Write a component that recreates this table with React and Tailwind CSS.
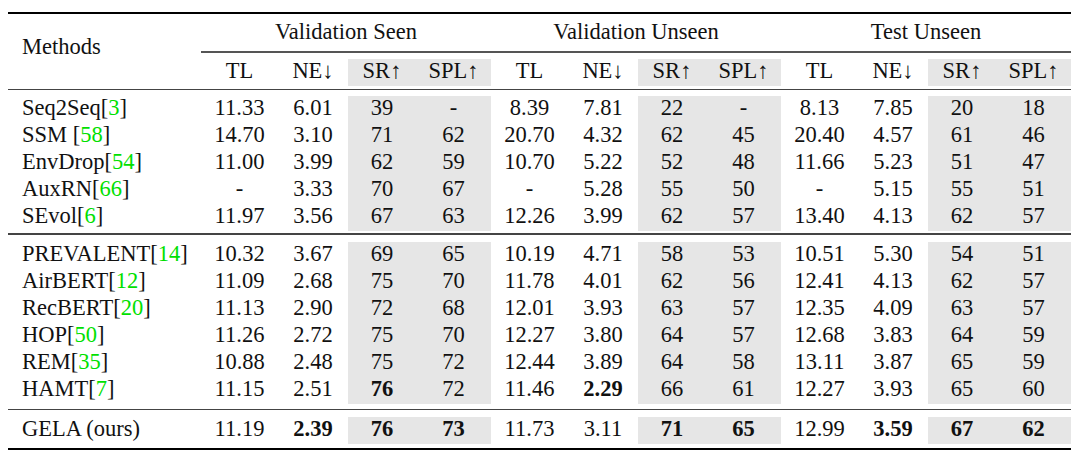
import React from "react";

const cols =
  "grid grid-cols-[193px_77px_70px_68px_75px_77px_70px_68px_75px_77px_70px_68px_75px]";

const groupA = [
  ["Seq2Seq", "3", "", ["11.33", "6.01", "39", "-", "8.39", "7.81", "22", "-", "8.13", "7.85", "20", "18"]],
  ["SSM", "58", " ", ["14.70", "3.10", "71", "62", "20.70", "4.32", "62", "45", "20.40", "4.57", "61", "46"]],
  ["EnvDrop", "54", "", ["11.00", "3.99", "62", "59", "10.70", "5.22", "52", "48", "11.66", "5.23", "51", "47"]],
  ["AuxRN", "66", "", ["-", "3.33", "70", "67", "-", "5.28", "55", "50", "-", "5.15", "55", "51"]],
  ["SEvol", "6", "", ["11.97", "3.56", "67", "63", "12.26", "3.99", "62", "57", "13.40", "4.13", "62", "57"]],
];

const groupB = [
  ["PREVALENT", "14", "", ["10.32", "3.67", "69", "65", "10.19", "4.71", "58", "53", "10.51", "5.30", "54", "51"]],
  ["AirBERT", "12", "", ["11.09", "2.68", "75", "70", "11.78", "4.01", "62", "56", "12.41", "4.13", "62", "57"]],
  ["RecBERT", "20", "", ["11.13", "2.90", "72", "68", "12.01", "3.93", "63", "57", "12.35", "4.09", "63", "57"]],
  ["HOP", "50", "", ["11.26", "2.72", "75", "70", "12.27", "3.80", "64", "57", "12.68", "3.83", "64", "59"]],
  ["REM", "35", "", ["10.88", "2.48", "75", "72", "12.44", "3.89", "64", "58", "13.11", "3.87", "65", "59"]],
  ["HAMT", "7", "", ["11.15", "2.51", "*76", "72", "11.46", "*2.29", "66", "61", "12.27", "3.93", "65", "60"]],
];

const ours = ["11.19", "*2.39", "*76", "*73", "11.73", "3.11", "*71", "*65", "12.99", "*3.59", "*67", "*62"];

// SR / SPL columns are shaded
const shaded = (i) => i % 4 === 2 || i % 4 === 3;

function Cell({ value, i }) {
  const bold = value.startsWith("*");
  const text = bold ? value.slice(1) : value;
  return (
    <div
      className={`h-[27px] flex items-center justify-center pb-[2px] leading-none ${
        shaded(i) ? "bg-[#e6e6e6]" : ""
      } ${bold ? "font-bold" : ""}`}
    >
      {text}
    </div>
  );
}

function Row({ name, cite, sep, values }) {
  return (
    <div className={cols}>
      <div className="h-[27px] flex items-center pl-[14px] pb-[2px] leading-none">
        {name}
        {sep}
        {cite && (
          <>
            [<span className="text-[#00e000]">{cite}</span>]
          </>
        )}
      </div>
      {values.map((v, i) => (
        <Cell key={i} value={v} i={i} />
      ))}
    </div>
  );
}

const subHeads = ["TL", "NE↓", "SR↑", "SPL↑"];

export default function App() {
  return (
    <div className="w-[1080px] h-[459px] bg-white pt-[12px] pl-[8px] font-['Liberation_Serif',serif] text-[22.5px] text-[#111]">
      <div className="w-[1063px]">
        <div className="h-[2px] bg-black" />

        {/* header */}
        <div className="flex">
          <div className="w-[193px] h-[71px] flex items-center pl-[14px] pb-[5px] leading-none">
            Methods
          </div>
          <div className="flex-1 flex flex-col">
            <div className="grid grid-cols-3 h-[37px] items-center">
              <div className="text-center leading-none">Validation Seen</div>
              <div className="text-center leading-none">Validation Unseen</div>
              <div className="text-center leading-none">Test Unseen</div>
            </div>
            <div className="h-[1.5px] bg-[#555]" />
            <div className="grid grid-cols-[77px_70px_68px_75px_77px_70px_68px_75px_77px_70px_68px_75px] mt-[6px]">
              {[0, 1, 2].flatMap((g) =>
                subHeads.map((h, j) => <Cell key={`${g}-${j}`} value={h} i={j} />)
              )}
            </div>
          </div>
        </div>

        <div className="h-[1.5px] bg-[#444] mt-[3px]" />

        <div className="mt-[6px]">
          {groupA.map(([n, c, s, v]) => (
            <Row key={n} name={n} cite={c} sep={s} values={v} />
          ))}
        </div>

        <div className="h-[1.5px] bg-[#444] mt-[2px]" />

        <div className="mt-[7px]">
          {groupB.map(([n, c, s, v]) => (
            <Row key={n} name={n} cite={c} sep={s} values={v} />
          ))}
        </div>

        <div className="h-[1.5px] bg-[#444] mt-[5px]" />

        <div className="mt-[7px]">
          <Row name="GELA (ours)" cite="" sep="" values={ours} />
        </div>

        <div className="h-[2px] bg-black mt-[4px]" />
      </div>
    </div>
  );
}
